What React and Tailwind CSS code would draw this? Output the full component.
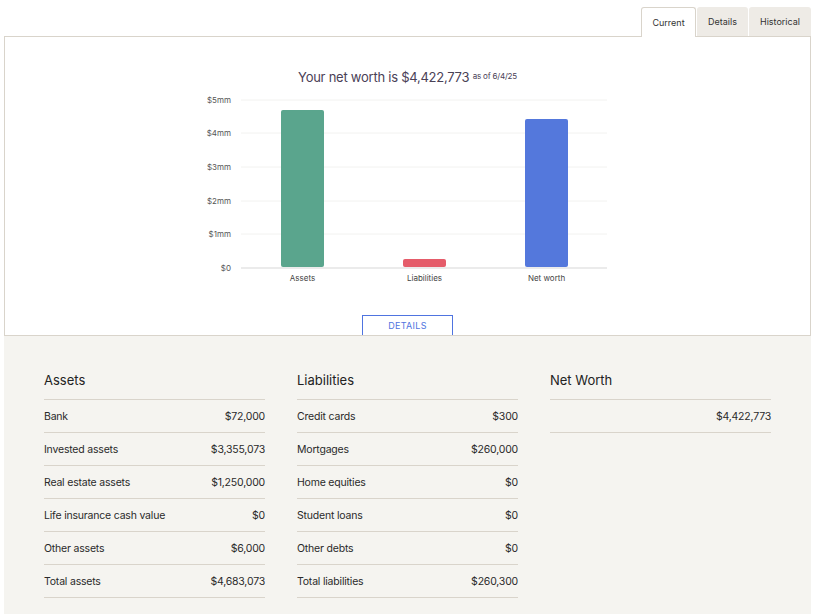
import React from "react";

const font = { fontFamily: "Inter, 'Noto Sans', sans-serif" };

const assets = [
  ["Bank", "$72,000"],
  ["Invested assets", "$3,355,073"],
  ["Real estate assets", "$1,250,000"],
  ["Life insurance cash value", "$0"],
  ["Other assets", "$6,000"],
  ["Total assets", "$4,683,073"],
];

const liabilities = [
  ["Credit cards", "$300"],
  ["Mortgages", "$260,000"],
  ["Home equities", "$0"],
  ["Student loans", "$0"],
  ["Other debts", "$0"],
  ["Total liabilities", "$260,300"],
];

// chart coords are page x - 5, page y - 86
const ticks = [
  ["$5mm", 100],
  ["$4mm", 133],
  ["$3mm", 167],
  ["$2mm", 201],
  ["$1mm", 234],
  ["$0", 268],
];

const bars = [
  { label: "Assets", x: 281, top: 110, color: "#5aa58d" },
  { label: "Liabilities", x: 403, top: 259, color: "#e55c6a" },
  { label: "Net worth", x: 525, top: 119, color: "#5478dc" },
];

function Chart() {
  return (
    <svg width="805" height="200" className="block">
      {ticks.map(([t, y]) => (
        <g key={t}>
          <line
            x1={241 - 5}
            x2={607 - 5}
            y1={y - 86}
            y2={y - 86}
            stroke={t === "$0" ? "#ebebeb" : "#f2f2f0"}
            strokeWidth={t === "$0" ? 2 : 1}
          />
          <text x={231 - 5} y={y - 86 + 3} textAnchor="end" fontSize="8" fill="#555" style={font}>
            {t}
          </text>
        </g>
      ))}
      {bars.map((b) => (
        <g key={b.label}>
          <rect x={b.x - 5} y={b.top - 86} width="43" height={267 - b.top} rx="2" fill={b.color} />
          <text x={b.x - 5 + 21.5} y={281 - 86} textAnchor="middle" fontSize="8" fill="#444" style={font}>
            {b.label}
          </text>
        </g>
      ))}
    </svg>
  );
}

function Column({ title, rows }) {
  return (
    <div className="w-[221px]">
      <div className="text-[13px] leading-[20px] text-[#222] pb-[9px] border-b border-[#d9d4cb]">{title}</div>
      {rows.map(([k, v], i) => (
        <div
          key={i}
          className="h-[33px] pt-[2px] flex items-center justify-between border-b border-[#d9d4cb] text-[10.5px] tracking-[-0.2px] text-[#2a2a2a]"
        >
          <span>{k}</span>
          <span>{v}</span>
        </div>
      ))}
    </div>
  );
}

export default function App() {
  return (
    <div className="w-[815px] h-[614px] bg-white overflow-hidden" style={font}>
      <div className="pt-[7px] w-[811px] flex justify-end gap-[1px]">
        <div className="w-[55px] h-[30px] flex items-center justify-center bg-white border border-b-0 border-[#d9d4cb] rounded-t-[3px] text-[9px] text-[#333] relative z-10 -mb-px">
          Current
        </div>
        <div className="w-[51px] h-[29px] flex items-center justify-center bg-[#eeebe6] rounded-t-[3px] text-[9px] text-[#333]">
          Details
        </div>
        <div className="w-[62px] h-[29px] flex items-center justify-center bg-[#eeebe6] rounded-t-[3px] text-[9px] text-[#333]">
          Historical
        </div>
      </div>
      <div className="ml-[4px] w-[807px] border border-[#d9d4cb] bg-white flex flex-col items-center">
        <div className="mt-[30px] -mb-px text-[13px] tracking-[-0.25px] leading-[20px] text-[#4a4156]">
          Your net worth is $4,422,773{" "}
          <span className="text-[8px] tracking-[-0.2px] align-top relative -top-[1px]">as of 6/4/25</span>
        </div>
        <Chart />
        <button className="mt-[29px] w-[91px] h-[20px] border border-[#4f74e0] border-b-0 bg-white text-[9px] text-[#4f74e0] tracking-[0.3px]">
          DETAILS
        </button>
      </div>
      <div className="ml-[4px] w-[807px] h-[300px] bg-[#f5f4f0] pt-[34px] pl-[40px] flex gap-[32px]">
        <Column title="Assets" rows={assets} />
        <Column title="Liabilities" rows={liabilities} />
        <Column title="Net Worth" rows={[["", "$4,422,773"]]} />
      </div>
    </div>
  );
}
